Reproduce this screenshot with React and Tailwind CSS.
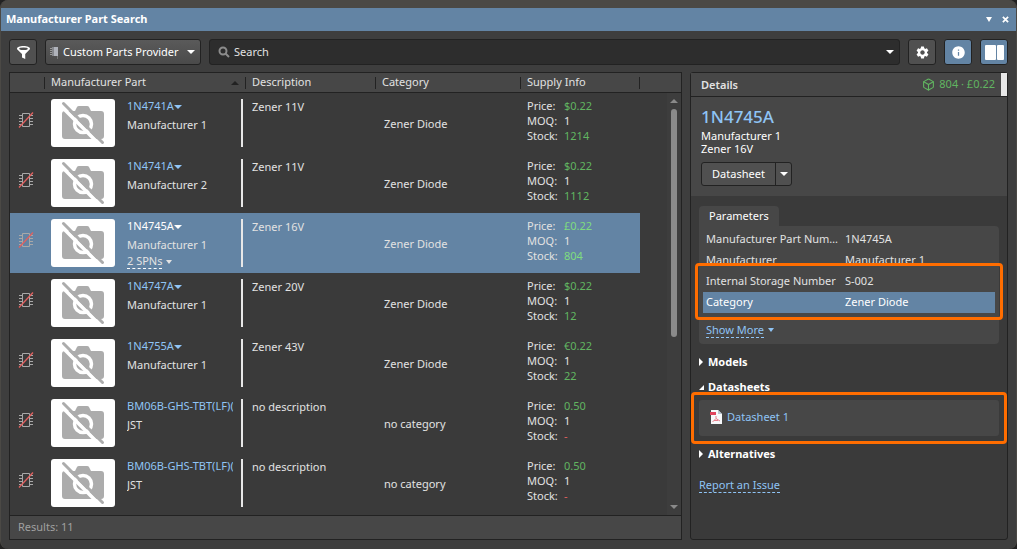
import React from "react";
import { FiBox } from "react-icons/fi";
import { MdSettings, MdInfo } from "react-icons/md";

const parts = [
  { name: "1N4741A", maker: "Manufacturer 1", description: "Zener 11V", category: "Zener Diode", price: "$0.22", moq: "1", stock: "1214" },
  { name: "1N4741A", maker: "Manufacturer 2", description: "Zener 11V", category: "Zener Diode", price: "$0.22", moq: "1", stock: "1112" },
  { name: "1N4745A", maker: "Manufacturer 1", description: "Zener 16V", category: "Zener Diode", price: "£0.22", moq: "1", stock: "804", spns: "2 SPNs", selected: true },
  { name: "1N4747A", maker: "Manufacturer 1", description: "Zener 20V", category: "Zener Diode", price: "$0.22", moq: "1", stock: "12" },
  { name: "1N4755A", maker: "Manufacturer 1", description: "Zener 43V", category: "Zener Diode", price: "€0.22", moq: "1", stock: "22" },
  { name: "BM06B-GHS-TBT(LF)(S", maker: "JST", description: "no description", category: "no category", price: "0.50", moq: "1", stock: "-" },
  { name: "BM06B-GHS-TBT(LF)(S", maker: "JST", description: "no description", category: "no category", price: "0.50", moq: "1", stock: "-" },
];

const parameters = [
  { label: "Manufacturer Part Number", value: "1N4745A" },
  { label: "Manufacturer", value: "Manufacturer 1" },
  { label: "Internal Storage Number", value: "S-002" },
  { label: "Category", value: "Zener Diode", selected: true },
];

const Caret = ({ className = "w-2 h-1" }) => (
  <svg viewBox="0 0 8 4" preserveAspectRatio="none" className={`shrink-0 fill-current ${className}`} aria-hidden="true">
    <path d="M0 0h8L4 4z" />
  </svg>
);

const FunnelIcon = () => (
  <svg viewBox="0 0 12 12" className="w-[13px] h-[13px]" aria-hidden="true">
    <path d="M0 2.5C0 1 2.5 0 6 0s6 1 6 2.500c0 .6-.4 1-1 1.500L7.600 7.400V12L4.600 10.500V7.400L1 4C.4 3.500 0 3.100 0 2.500z" fill="#fff" />
    <ellipse cx="6" cy="2.500" rx="4" ry="1.200" fill="#505050" />
  </svg>
);

const ProviderIcon = () => (
  <svg viewBox="0 0 9 13" className="w-[9px] h-[13px] shrink-0" aria-hidden="true">
    <path d="M2 1h4v9H2z" fill="#85878c" />
    <path d="M4 1h4v9H4z" fill="#b0b3bb" />
    <path d="M0 2.500h2M0 4.500h2M0 6.500h2M0 8.500h2" stroke="#9a9a9a" />
    <path d="M7.500 10v3" stroke="#777" />
  </svg>
);

const NoFootprintIcon = () => (
  <svg viewBox="0 0 16 18" className="w-4 h-[18px]" fill="none" aria-hidden="true">
    <path d="M4.500 2.500h7v13h-7zM1 4.500h3M1 7.500h3M1 10.500h3M1 13.500h3M12 4.500h3M12 7.500h3M12 10.500h3M12 13.500h3" stroke="#a8a8a8" />
    <path d="M1 16.500 15 1.500" stroke="#e0605f" strokeWidth="1.300" />
  </svg>
);

const NoPhoto = () => (
  <svg viewBox="0 0 64 48" className="w-16 h-12 shrink-0 rounded-[3px] bg-white" aria-label="No image">
    <path d="M14 12h10l2-4q.5-1 2-1h8q1.500 0 2 1l2 4h10q3 0 3 3v22q0 3-3 3H14q-3 0-3-3V15q0-3 3-3z" fill="#acacac" />
    <circle cx="32" cy="25" r="8.500" fill="none" stroke="#fff" strokeWidth="3.500" />
    <path d="M9 6 49 46" stroke="#fff" strokeWidth="3.500" />
    <path d="M12.500 4.500 51.500 43.500" stroke="#acacac" strokeWidth="3" strokeLinecap="round" />
  </svg>
);

const PdfIcon = () => (
  <svg viewBox="0 0 12 14" className="w-3 h-3.5 shrink-0" aria-hidden="true">
    <path d="M1 0h7l4 4v10H1z" fill="#f6f8fa" />
    <path d="M8 0v4h4z" fill="#b9c6d2" />
    <path d="M0 2h6v3H0z" fill="#e0435c" />
    <path d="M6 6v2.500L2.500 12M6 8.500l4 2.500M4 10.500h4" stroke="#e77f8c" fill="none" />
  </svg>
);

const HeaderCell = ({ children, className = "" }) => (
  <th scope="col" className="h-5 p-0 font-normal text-left border-b border-[#222]">
    <div className={`flex items-center justify-between h-3 border-l border-[#222] pl-1.5 ${className}`}>{children}</div>
  </th>
);

const PartRow = ({ part }) => {
  const link = part.selected ? "text-white" : "text-[#8fc4f5]";
  const amount = part.selected ? "text-[#7fdc7f]" : "text-[#61b561]";
  const cell = part.selected ? "bg-[#6384a4] p-0" : "p-0";

  return (
    <tr className="h-[60px] align-top">
      <td className={cell}>
        <div className="pl-2 pt-[18px]">
          <NoFootprintIcon />
        </div>
      </td>
      <td className={cell}>
        <div className="flex pl-[7px] pt-1.5 pr-0.5">
          <NoPhoto />
          <div className="flex-1 min-w-0 h-[52px] ml-3 mr-2 overflow-hidden whitespace-nowrap">
            <a href="#part" className={`flex items-center h-[15px] ${link}`}>
              {part.name}
              <Caret />
            </a>
            <p className="mt-[3px] leading-[15px]">{part.maker}</p>
            {part.spns && (
              <button type="button" className="flex items-center gap-1 mt-0.5">
                <span className="h-[15px] leading-[14px] border-b border-dashed border-white">{part.spns}</span>
                <Caret className="w-1.5 h-1" />
              </button>
            )}
          </div>
          <span className="w-0.5 h-12 bg-[#e8e8e8]" />
        </div>
      </td>
      <td className={`${cell} leading-[15px]`}>
        <p className="pl-[7px] pt-1.5">{part.description}</p>
      </td>
      <td className={`${cell} leading-[15px]`}>
        <p className="pl-[9px] pt-[23px]">{part.category}</p>
      </td>
      <td className={cell}>
        <dl className="grid grid-cols-[37px_1fr] pl-[7px] pt-[5px] leading-[15px]">
          <dt>Price:</dt>
          <dd className={amount}>{part.price}</dd>
          <dt>MOQ:</dt>
          <dd>{part.moq}</dd>
          <dt>Stock:</dt>
          <dd className={part.stock === "-" ? "text-[#e0605f]" : amount}>{part.stock}</dd>
        </dl>
      </td>
      <td className="p-0" />
    </tr>
  );
};

const PartList = () => (
  <section className="flex flex-col flex-1 min-w-0 border border-[#222] bg-[#3a3a3a]">
    <div className="relative flex-1">
      <table className="w-full table-fixed border-separate border-spacing-0">
        <colgroup>
          <col className="w-[34px]" />
          <col className="w-[201px]" />
          <col className="w-[130px]" />
          <col className="w-[145px]" />
          <col className="w-[120px]" />
          <col />
        </colgroup>
        <thead className="bg-[#474747]">
          <tr>
            <td className="p-0 border-b border-[#222]" />
            <HeaderCell>
              Manufacturer Part
              <Caret className="w-2 h-1 rotate-180 mr-1.5 text-[#222]" />
            </HeaderCell>
            <HeaderCell>Description</HeaderCell>
            <HeaderCell>Category</HeaderCell>
            <HeaderCell className="border-r">Supply Info</HeaderCell>
            <td className="p-0 border-b border-[#222]" />
          </tr>
        </thead>
        <tbody>
          {parts.map((part, i) => (
            <PartRow key={i} part={part} />
          ))}
        </tbody>
      </table>

      {/* Scrollbar */}
      <div className="absolute right-0 top-5 bottom-0 flex flex-col items-center w-3.5 py-1.5 bg-[#3d3d3d] text-[#8a8a8a]">
        <Caret className="w-2 h-1 rotate-180" />
        <span className="w-1.5 h-[228px] mt-1.5 rounded-full bg-[#8a8a8a]" />
        <Caret className="w-2 h-1 mt-auto" />
      </div>
    </div>
    <footer className="flex items-center h-6 px-2 border-t border-[#222] bg-[#474747] text-[#a0a0a0]">Results: 11</footer>
  </section>
);

const SectionToggle = ({ open = false, children }) => (
  <button type="button" className="flex items-center gap-1 h-4 font-bold text-white">
    <svg viewBox="0 0 5 8" className="w-[5px] h-2 fill-white" aria-hidden="true">
      <path d={open ? "M5 2v5H0z" : "M0 0l4 4-4 4z"} />
    </svg>
    {children}
  </button>
);

const Details = () => (
  <aside className="flex flex-col w-[318px] shrink-0 border border-[#222] rounded-[3px] bg-[#3a3a3a]">
    <header className="flex items-center h-6 pl-2.5 border-b border-[#222] bg-[#474747]">
      <h2 className="leading-4 font-semibold">Details</h2>
      <p className="flex items-center gap-1 ml-auto mr-1.5 text-[#61b561]">
        <FiBox size={13} />
        804 · £0.22
      </p>
      <span className="w-1.5 h-full bg-[#e8e8e8]" />
    </header>

    <div className="h-[99px] pl-2.5 pt-2 bg-[#474747] text-white">
      <h1 className="text-[17px] leading-6 font-medium text-[#8fc4f5]">1N4745A</h1>
      <p className="leading-[13px]">Manufacturer 1</p>
      <p className="leading-[13px]">Zener 16V</p>
      <div className="flex w-[91px] h-6 mt-[7px] border border-[#222] rounded-[3px] bg-[#505050]">
        <button type="button" className="flex-1">Datasheet</button>
        <button type="button" aria-label="More datasheets" className="flex items-center justify-center w-4 border-l border-[#222]">
          <Caret />
        </button>
      </div>
    </div>

    <div className="flex flex-col items-start px-2 pt-2.5">
      <h3 className="h-5 px-2.5 leading-5 rounded-t-[4px] bg-[#474747] text-white">Parameters</h3>
      <div className="w-full h-[118px] px-1 pt-[3px] rounded-[4px] rounded-tl-none bg-[#474747]">
        <div className="relative">
          <table className="w-full table-fixed border-collapse">
            <tbody>
              {parameters.map((row) => (
                <tr key={row.label} className={row.selected ? "h-[21px] bg-[#6384a4] text-white" : "h-[21px]"}>
                  <th scope="row" className="w-[139px] py-0 pl-[3px] pr-0 font-normal text-left truncate">{row.label}</th>
                  <td className="py-0 pl-[3px]">{row.value}</td>
                </tr>
              ))}
            </tbody>
          </table>
          <span className="absolute top-[34px] -bottom-[7px] -inset-x-2 border-3 border-[#ff6d00] rounded-[4px]" />
        </div>
        <button type="button" className="flex items-center gap-1 mt-[9px] ml-[3px] text-[#8fc4f5]">
          <span className="h-4 leading-[15px] border-b border-dashed border-[#8fc4f5]">Show More</span>
          <Caret className="w-1.5 h-1" />
        </button>
      </div>

      <div className="w-full pt-2.5 space-y-[9px]">
        <SectionToggle>Models</SectionToggle>
        <SectionToggle open>Datasheets</SectionToggle>
      </div>
      <div className="relative flex w-full h-9 mt-[5px] pl-[11px] pt-[9px] rounded-[3px] bg-[#474747]">
        <a href="#datasheet" className="flex items-center gap-[5px] h-4 text-[#8fc4f5]">
          <PdfIcon />
          Datasheet 1
        </a>
        <span className="absolute -inset-2 border-3 border-[#ff6d00] rounded-[4px]" />
      </div>
      <div className="pt-2.5">
        <SectionToggle>Alternatives</SectionToggle>
      </div>
      <a href="#report" className="h-4 mt-[15px] leading-[15px] border-b border-dashed border-[#8fc4f5] text-[#8fc4f5]">
        Report an Issue
      </a>
    </div>
  </aside>
);

const toolButton = "flex items-center justify-center w-7 h-[26px] shrink-0 border border-[#222] rounded-[3px] text-white";

const App = () => (
  <div className="min-h-screen bg-[#222] font-['Noto_Sans',sans-serif] text-[11px] text-[#e2e2e2]">
    <div className="flex flex-col min-h-screen border-x border-[#4b4945] rounded-lg bg-[#3e3e3e] overflow-hidden">
      <div className="h-2 bg-[#4b4945]" />
      <header className="flex items-center h-[23px] pl-[5px] pr-[7px] bg-[#6384a4] text-white">
        <h1 className="font-bold">Manufacturer Part Search</h1>
        <button type="button" aria-label="Panel menu" className="ml-auto">
          <Caret className="w-1.5 h-[5px]" />
        </button>
        <button type="button" aria-label="Close" className="ml-2.5">
          <svg viewBox="0 0 8 8" className="w-[7px] h-[7px]" aria-hidden="true">
            <path d="M1 1l6 6M7 1L1 7" stroke="#fff" strokeWidth="2" />
          </svg>
        </button>
      </header>

      <div className="flex items-center gap-2 px-2 pt-2 pb-[7px]">
        <button type="button" aria-label="Filter" className={`${toolButton} bg-[#505050]`}>
          <FunnelIcon />
        </button>
        <button type="button" className="flex items-center w-[156px] h-[26px] shrink-0 pl-1 pr-[5px] border border-[#222] rounded-[3px] bg-linear-to-b from-[#5a5a5a] to-[#4a4a4a] text-white whitespace-nowrap">
          <ProviderIcon />
          <span className="ml-1">Custom Parts Provider</span>
          <Caret className="w-2 h-1 ml-auto" />
        </button>
        <div className="flex flex-1 items-center h-[26px] pl-2 pr-[5px] border border-[#222] rounded-[3px] bg-[#2d2d2d]">
          <svg viewBox="0 0 12 12" className="w-3 h-3 shrink-0" fill="none" stroke="#8c8c8c" strokeWidth="2" aria-hidden="true">
            <circle cx="5" cy="5" r="3.500" />
            <path d="M7.500 7.500 11 11" />
          </svg>
          <input type="text" aria-label="Search" placeholder="Search" className="flex-1 min-w-0 ml-1 bg-transparent outline-none placeholder:text-[#e2e2e2]" />
          <button type="button" aria-label="Search history" className="text-white">
            <Caret />
          </button>
        </div>
        <button type="button" aria-label="Settings" className={`${toolButton} bg-[#505050]`}>
          <MdSettings size={15} />
        </button>
        <button type="button" aria-label="Information" className={`${toolButton} bg-[#6384a4]`}>
          <MdInfo size={15} />
        </button>
        <button type="button" aria-label="Toggle details" className={`${toolButton} bg-[#6384a4]`}>
          <svg viewBox="0 0 19 15" className="w-[19px] h-[15px] fill-white" aria-hidden="true">
            <rect width="11" height="15" rx="1" />
            <rect x="12" width="7" height="15" rx="1" />
          </svg>
        </button>
      </div>

      <main className="flex flex-1 gap-2 px-2 pb-[9px]">
        <PartList />
        <Details />
      </main>
    </div>
  </div>
);

export default App;
